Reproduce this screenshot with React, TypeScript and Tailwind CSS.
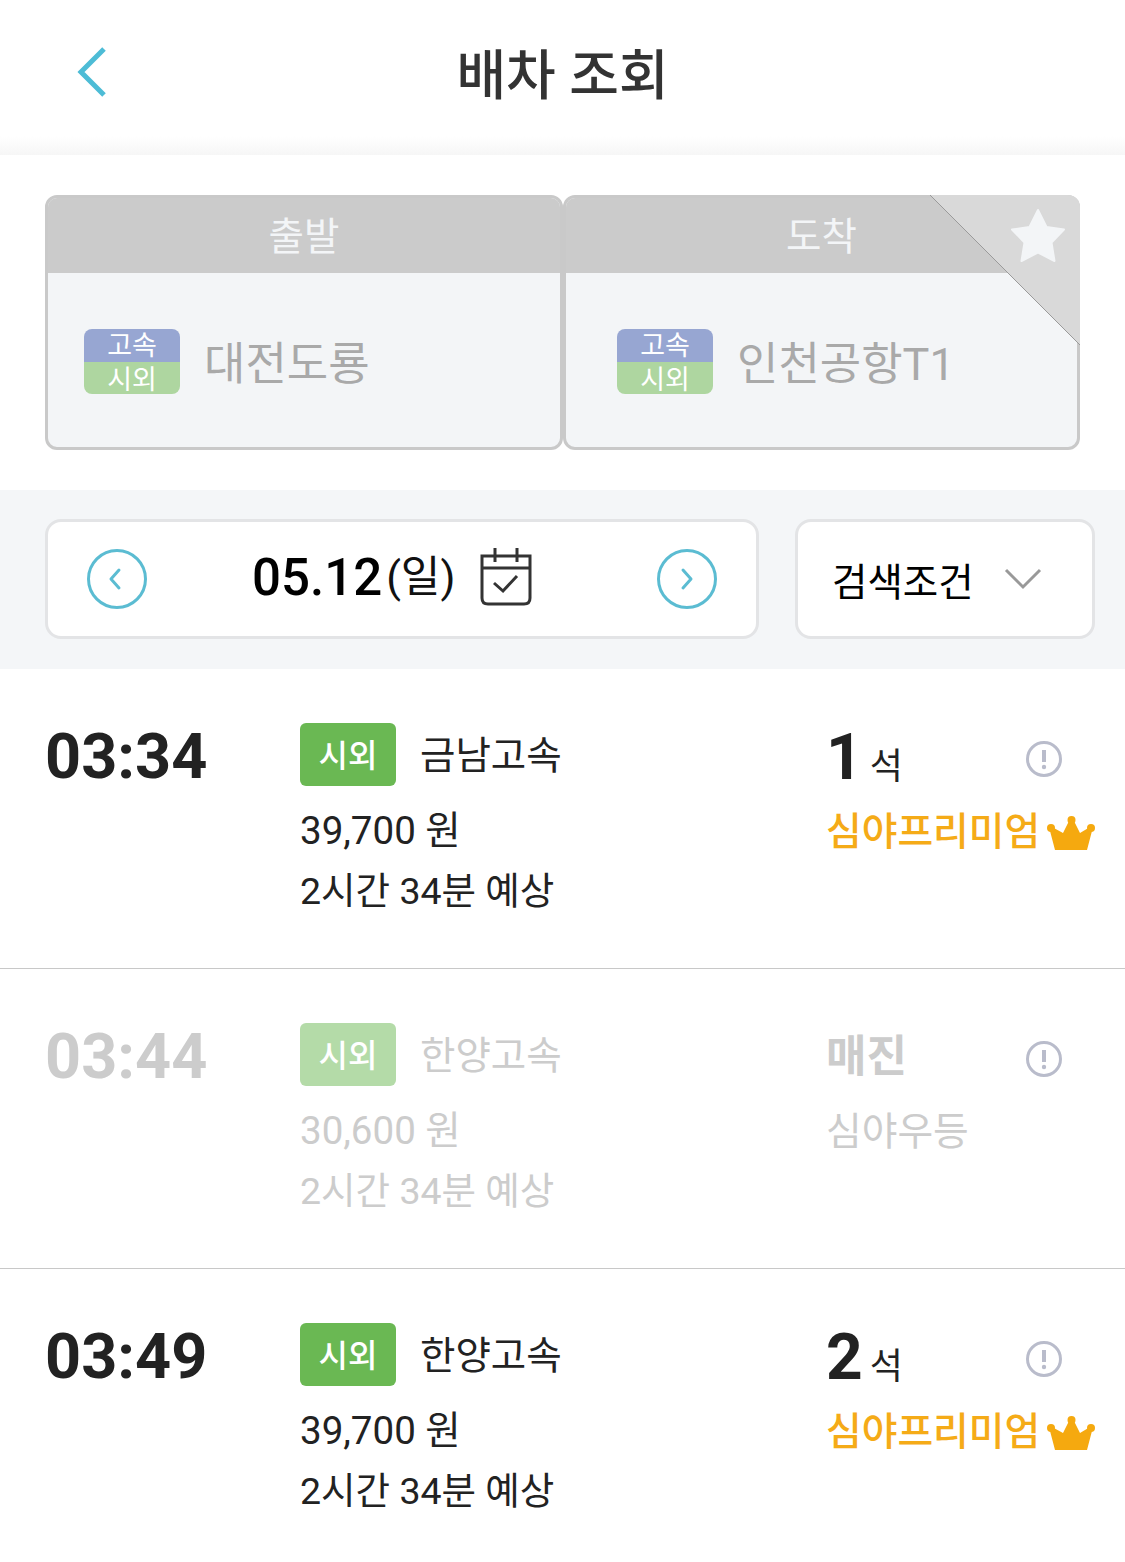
import React from "react";

interface Trip {
  time: string;
  company: string;
  price: string;
  duration: string;
  seats?: string;
  grade: string;
  premium?: boolean;
}

const trips: Trip[] = [
  { time: "03:34", company: "금남고속", price: "39,700 원", duration: "2시간 34분 예상", seats: "1", grade: "심야프리미엄", premium: true },
  { time: "03:44", company: "한양고속", price: "30,600 원", duration: "2시간 34분 예상", grade: "심야우등" },
  { time: "03:49", company: "한양고속", price: "39,700 원", duration: "2시간 34분 예상", seats: "2", grade: "심야프리미엄", premium: true },
];

const fontStack = "font-['Roboto','Noto_Sans_CJK_KR',sans-serif]";

const TerminalCard = ({ label, name, className, inset }: { label: string; name: string; className: string; inset: string }) => (
  <div className={`flex flex-col h-[255px] rounded-[12px] border-[3px] border-[#c9c9c9] bg-[#f3f5f7] ${className}`}>
    <div className="h-[75px] bg-[#cbcbcb] rounded-t-[9px] flex items-center justify-center text-[38.5px] text-[#f3f5f7] pt-[2px]">{label}</div>
    <div className={`flex-1 flex items-center pt-[3px] ${inset}`}>
      <div className="w-[96px] h-[65px] flex flex-col text-[27px] text-white text-center shrink-0">
        <div className="h-[33px] rounded-t-[8px] bg-[#97a6d2] pt-[3px] leading-[28px]">고속</div>
        <div className="h-[32px] rounded-b-[8px] bg-[#aed6a0] pt-[4px] leading-[28px]">시외</div>
      </div>
      <div className="ml-[24px] text-[45px] leading-none text-[#a9a9a9] pt-[6px]">{name}</div>
    </div>
  </div>
);

const CircleArrow = ({ dir }: { dir: "left" | "right" }) => (
  <svg width="60" height="60" viewBox="0 0 60 60" fill="none" stroke="#5bbcd2" strokeWidth="3">
    <circle cx="30" cy="30" r="28.5" />
    <path d={dir === "left" ? "M32 21 L24 30 L32 39" : "M26 21 L34 30 L26 39"} strokeLinecap="round" strokeLinejoin="round" />
  </svg>
);

const CalendarIcon = () => (
  <svg width="52" height="58" viewBox="0 0 52 58" fill="none" stroke="#333333" strokeWidth="3">
    <path d="M2 8 H50 V50 Q50 56 44 56 H8 Q2 56 2 50 Z" />
    <path d="M2 20 H50 M15 0 V14 M37 0 V14" />
    <path d="M14 35 L23 43 L37 28" />
  </svg>
);

const InfoIcon = () => (
  <svg width="36" height="36" viewBox="0 0 36 36" fill="none">
    <circle cx="18" cy="18" r="16.5" stroke="#b9bccb" strokeWidth="3" />
    <path d="M18 9 V21" stroke="#b9bccb" strokeWidth="4" />
    <circle cx="18" cy="26" r="2.2" fill="#b9bccb" />
  </svg>
);

const Crown = () => (
  <svg width="48" height="34" viewBox="0 0 48 34" fill="#f5a90f">
    <path d="M8 34 L2.5 13 L5 11 L16 17 L22 5 L27 5 L33 17 L43 11 L45.5 13 L40 34 Z" />
    <circle cx="24.5" cy="4" r="4" />
    <circle cx="4" cy="12" r="4" />
    <circle cx="44" cy="12" r="4" />
  </svg>
);

const TripRow = ({ trip, last }: { trip: Trip; last: boolean }) => {
  const sold = !trip.seats;
  const main = sold ? "text-[#cccccc]" : "text-[#222222]";
  return (
    <div className={`flex pt-[54px] ${last ? "" : "h-[300px] border-b border-[#c8c8c8]"}`}>
      <div className={`w-[255px] ml-[45px] text-[63px] leading-[63px] font-bold pt-[2px] ${main}`}>{trip.time}</div>
      <div className="w-[526px]">
        <div className="flex items-center h-[63px]">
          <div className={`w-[96px] h-[63px] rounded-[6px] flex items-center justify-center text-white text-[32px] font-medium pt-[2px] ${sold ? "bg-[#b4dba8]" : "bg-[#6ab853]"}`}>
            시외
          </div>
          <div className={`ml-[24px] text-[38.5px] leading-none pt-[3px] ${main}`}>{trip.company}</div>
        </div>
        <div className={`mt-[15px] text-[38.5px] leading-[60px] ${main}`}>{trip.price}</div>
        <div className={`text-[37.5px] leading-[60px] ${main}`}>{trip.duration}</div>
      </div>
      <div className="flex-1">
        <div className="flex h-[63px]">
          <div className="w-[200px] flex items-baseline pt-[3px]">
            {sold ? (
              <span className="text-[44px] leading-[63px] font-bold text-[#cccccc]">매진</span>
            ) : (
              <>
                <span className="text-[64px] leading-[63px] font-bold text-[#222222]">{trip.seats}</span>
                <span className="ml-[7px] text-[36px] text-[#222222]">석</span>
              </>
            )}
          </div>
          <div className="mt-[18px]">
            <InfoIcon />
          </div>
        </div>
        <div className="mt-[16px] flex items-center h-[60px]">
          <span className={`text-[38.8px] leading-none ${trip.premium ? "text-[#f5ab17] font-medium" : "text-[#cccccc]"}`}>{trip.grade}</span>
          {trip.premium && (
            <span className="ml-[7px] mt-[2px]">
              <Crown />
            </span>
          )}
        </div>
      </div>
    </div>
  );
};

export default function App() {
  return (
    <div className={`w-[1125px] h-[1562px] overflow-hidden bg-white ${fontStack}`}>
      <header className="relative h-[155px] flex items-center justify-center bg-linear-to-b from-white from-88% to-[#f6f6f6]">
        <svg className="absolute left-[76px] top-[46px]" width="32" height="52" viewBox="0 0 32 52" fill="none" stroke="#4dbcd6" strokeWidth="5">
          <path d="M28 3 L5 26 L28 49" />
        </svg>
        <h1 className="text-[54px] leading-none font-medium text-[#333333] pb-[2px]">배차 조회</h1>
      </header>

      <section className="h-[335px] pt-[40px] pl-[45px]">
        <div className="relative w-[1035px] flex">
          <TerminalCard label="출발" name="대전도룡" className="w-[518px]" inset="pl-[36px]" />
          <TerminalCard label="도착" name="인천공항T1" className="w-[517px]" inset="pl-[51px]" />
          <svg className="absolute top-0 right-0 rounded-tr-[12px]" width="150" height="150" viewBox="0 0 150 150">
            <path d="M0 0 H150 V150 Z" fill="#d9d9d9" />
            <path d="M0 0 L150 150" stroke="#9a9a9a" strokeWidth="1" />
            <path d="M108 15 L116.5 32 L134 34.5 L121.5 47.5 L124.5 66 L108 57.5 L91.5 66 L94.5 47.5 L82 34.5 L99.5 32 Z" fill="#f3f5f7" stroke="#f3f5f7" strokeWidth="2" strokeLinejoin="round" />
          </svg>
        </div>
      </section>

      <section className="h-[179px] bg-[#f4f6f8] pt-[29px] pl-[45px] flex">
        <div className="w-[714px] h-[120px] rounded-[16px] border-[3px] border-[#e3e4e6] bg-white flex items-center pl-[39px] pr-[39px]">
          <CircleArrow dir="left" />
          <div className="flex-1 flex items-center pl-[105px] -mt-[3px]">
            <span className="text-[51px] leading-none font-medium text-black">05.12</span>
            <span className="ml-[4px] text-[43px] leading-none text-[#111111]">(일)</span>
            <span className="ml-[25px] -mt-[2px]">
              <CalendarIcon />
            </span>
          </div>
          <CircleArrow dir="right" />
        </div>
        <div className="ml-[36px] w-[300px] h-[120px] rounded-[16px] border-[3px] border-[#e3e4e6] bg-white flex items-center pl-[34px]">
          <span className="text-[38.5px] leading-none text-black pt-[8px]">검색조건</span>
          <svg className="ml-[30px]" width="38" height="22" viewBox="0 0 38 22" fill="none" stroke="#999999" strokeWidth="3">
            <path d="M2 2 L19 19 L36 2" />
          </svg>
        </div>
      </section>

      <section>
        {trips.map((trip, i) => (
          <TripRow key={trip.time} trip={trip} last={i === trips.length - 1} />
        ))}
      </section>
    </div>
  );
}
